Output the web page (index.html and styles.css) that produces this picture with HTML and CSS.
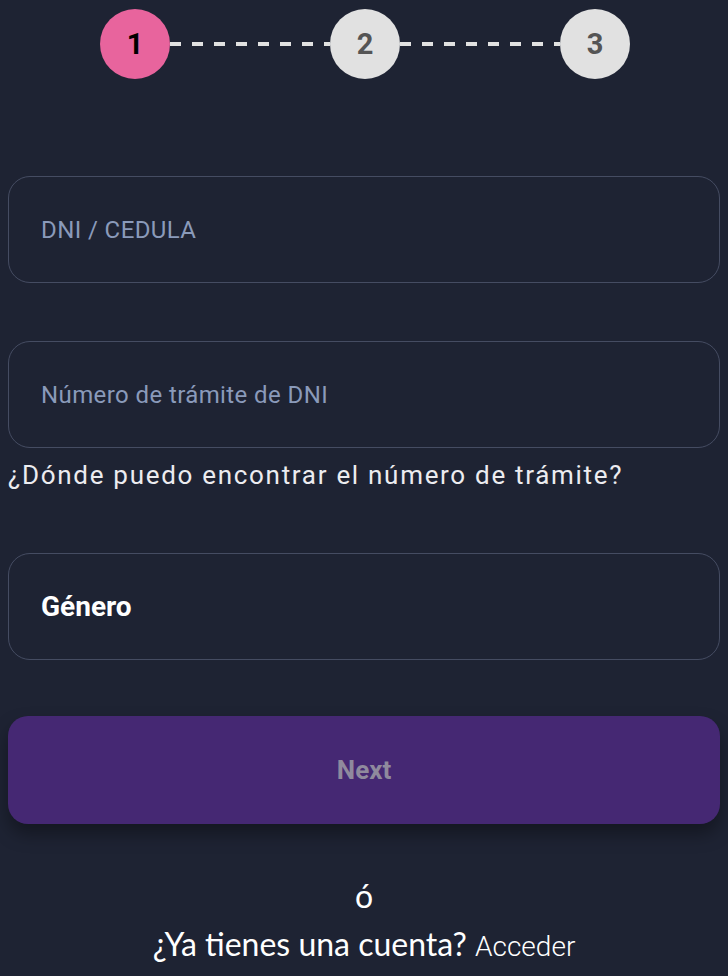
FILE: index.html
```html
<!DOCTYPE html>
<html lang="es">
<head>
<meta charset="utf-8">
<title>Registro</title>
<link rel="stylesheet" href="styles.css">
</head>
<body>
<main class="page">
  <div class="stepper">
    <div class="step step-active">1</div>
    <div class="connector"></div>
    <div class="step">2</div>
    <div class="connector"></div>
    <div class="step">3</div>
  </div>

  <form class="form">
    <div class="field field-first">
      <input class="input" type="text" placeholder="DNI / CEDULA">
    </div>
    <div class="field field-second">
      <input class="input" type="text" placeholder="Número de trámite de DNI">
      <p class="help">¿Dónde puedo encontrar el número de trámite?</p>
    </div>
    <div class="field field-third">
      <div class="select">Género</div>
    </div>
    <button class="next" type="button">Next</button>
  </form>

  <div class="footer">
    <p class="or">ó</p>
    <p class="login">¿Ya tienes una cuenta? <a class="login-link" href="#">Acceder</a></p>
  </div>
</main>
</body>
</html>
```

FILE: styles.css
```css
html, body {
  margin: 0;
  padding: 0;
  background: #1e2333;
}

body {
  padding: 8px;
  font-family: Roboto, "Noto Sans", sans-serif;
  color: #ffffff;
}

.page {
  display: flex;
  flex-direction: column;
}

.stepper {
  display: flex;
  align-items: center;
  width: 530px;
  margin: 1px auto 0;
  transform: translateX(1px);
}

.step {
  width: 70px;
  height: 70px;
  flex: 0 0 70px;
  border-radius: 50%;
  background: #e1e1e1;
  color: #555555;
  font-weight: 700;
  font-size: 29px;
  display: flex;
  align-items: center;
  justify-content: center;
}

.step-active {
  background: #e8649d;
  color: #000000;
}

.connector {
  flex: 1;
  height: 4px;
  background: repeating-linear-gradient(to right, #e1e1e1 0 11px, transparent 11px 22px);
}

.form {
  display: flex;
  flex-direction: column;
  margin-top: 97px;
}

.field {
  display: flex;
  flex-direction: column;
}

.field-second {
  margin-top: 58px;
}

.field-third {
  margin-top: 63px;
}

.input,
.select {
  box-sizing: border-box;
  width: 100%;
  height: 107px;
  border: 1.5px solid #454c62;
  border-radius: 22px;
  background: transparent;
  padding: 0 32px;
  font-family: Roboto, "Noto Sans", sans-serif;
  font-size: 24px;
  letter-spacing: 0.4px;
  color: #ffffff;
  outline: none;
}

.input::placeholder {
  color: #8a9aba;
}

.select {
  display: flex;
  align-items: center;
  font-weight: 700;
  font-size: 28px;
  letter-spacing: 0;
}

.help {
  margin: 12px 0 0;
  font-size: 26px;
  line-height: 30px;
  color: #ececf0;
  letter-spacing: 1.7px;
}

.next {
  margin-top: 56px;
  height: 108px;
  border: none;
  border-radius: 20px;
  background: #452873;
  color: #8f8a9d;
  font-family: Roboto, "Noto Sans", sans-serif;
  font-weight: 700;
  font-size: 26px;
  box-shadow: 0 10px 18px rgba(0, 0, 0, 0.35);
}

.footer {
  margin-top: 52px;
  display: flex;
  flex-direction: column;
  align-items: center;
}

.or {
  margin: 0;
  font-family: Lato, "Open Sans", sans-serif;
  font-size: 32px;
  line-height: 40px;
  color: #ffffff;
}

.login {
  margin: 8px 0 0;
  font-family: Lato, "Open Sans", sans-serif;
  font-size: 32px;
  line-height: 40px;
  color: #ffffff;
}

.login-link {
  font-family: Roboto, sans-serif;
  font-weight: 300;
  font-size: 28px;
  color: #ffffff;
  text-decoration: none;
}
```
